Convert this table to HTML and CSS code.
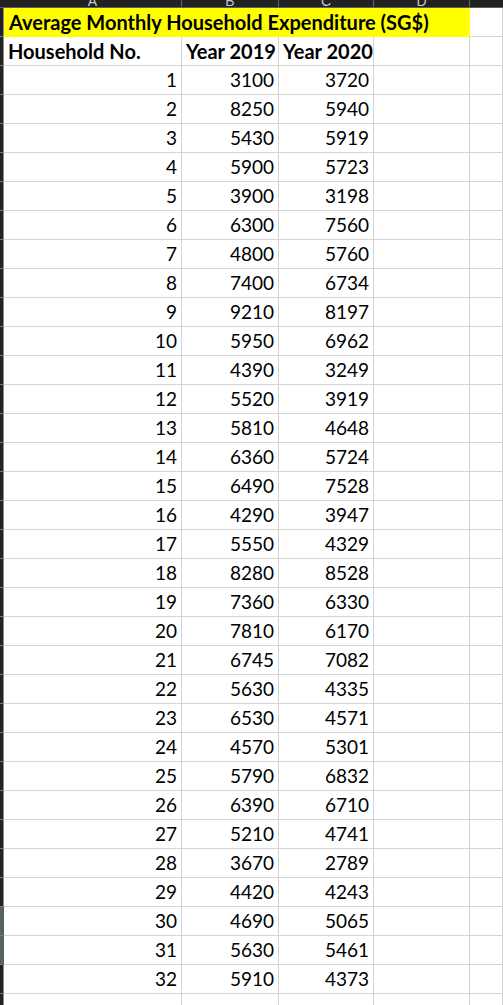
FILE: index.html
```html
<!DOCTYPE html>
<html>
<head>
<meta charset="utf-8">
<link rel="stylesheet" href="styles.css">
</head>
<body>
<div class="sheet">
  <div class="row colbar">
    <div class="corner"></div>
    <div class="ch"><span>A</span></div>
    <div class="ch"><span>B</span></div>
    <div class="ch"><span>C</span></div>
    <div class="ch"><span>D</span></div>
    <div class="ch last"></div>
  </div>
  <div class="row">
    <div class="rh"></div>
    <div class="cell title">Average Monthly Household Expenditure (SG$)</div>
    <div class="cell"></div>
  </div>
  <div class="row">
    <div class="rh"></div>
    <div class="cell bold">Household No.</div>
    <div class="cell bold">Year 2019</div>
    <div class="cell bold">Year 2020</div>
    <div class="cell"></div>
    <div class="cell"></div>
  </div>
  <div class="row"><div class="rh"></div><div class="cell num">1</div><div class="cell num">3100</div><div class="cell num">3720</div><div class="cell"></div><div class="cell"></div></div>
  <div class="row"><div class="rh"></div><div class="cell num">2</div><div class="cell num">8250</div><div class="cell num">5940</div><div class="cell"></div><div class="cell"></div></div>
  <div class="row"><div class="rh"></div><div class="cell num">3</div><div class="cell num">5430</div><div class="cell num">5919</div><div class="cell"></div><div class="cell"></div></div>
  <div class="row"><div class="rh"></div><div class="cell num">4</div><div class="cell num">5900</div><div class="cell num">5723</div><div class="cell"></div><div class="cell"></div></div>
  <div class="row"><div class="rh"></div><div class="cell num">5</div><div class="cell num">3900</div><div class="cell num">3198</div><div class="cell"></div><div class="cell"></div></div>
  <div class="row"><div class="rh"></div><div class="cell num">6</div><div class="cell num">6300</div><div class="cell num">7560</div><div class="cell"></div><div class="cell"></div></div>
  <div class="row"><div class="rh"></div><div class="cell num">7</div><div class="cell num">4800</div><div class="cell num">5760</div><div class="cell"></div><div class="cell"></div></div>
  <div class="row"><div class="rh"></div><div class="cell num">8</div><div class="cell num">7400</div><div class="cell num">6734</div><div class="cell"></div><div class="cell"></div></div>
  <div class="row"><div class="rh"></div><div class="cell num">9</div><div class="cell num">9210</div><div class="cell num">8197</div><div class="cell"></div><div class="cell"></div></div>
  <div class="row"><div class="rh"></div><div class="cell num">10</div><div class="cell num">5950</div><div class="cell num">6962</div><div class="cell"></div><div class="cell"></div></div>
  <div class="row"><div class="rh"></div><div class="cell num">11</div><div class="cell num">4390</div><div class="cell num">3249</div><div class="cell"></div><div class="cell"></div></div>
  <div class="row"><div class="rh"></div><div class="cell num">12</div><div class="cell num">5520</div><div class="cell num">3919</div><div class="cell"></div><div class="cell"></div></div>
  <div class="row"><div class="rh"></div><div class="cell num">13</div><div class="cell num">5810</div><div class="cell num">4648</div><div class="cell"></div><div class="cell"></div></div>
  <div class="row"><div class="rh"></div><div class="cell num">14</div><div class="cell num">6360</div><div class="cell num">5724</div><div class="cell"></div><div class="cell"></div></div>
  <div class="row"><div class="rh"></div><div class="cell num">15</div><div class="cell num">6490</div><div class="cell num">7528</div><div class="cell"></div><div class="cell"></div></div>
  <div class="row"><div class="rh"></div><div class="cell num">16</div><div class="cell num">4290</div><div class="cell num">3947</div><div class="cell"></div><div class="cell"></div></div>
  <div class="row"><div class="rh"></div><div class="cell num">17</div><div class="cell num">5550</div><div class="cell num">4329</div><div class="cell"></div><div class="cell"></div></div>
  <div class="row"><div class="rh"></div><div class="cell num">18</div><div class="cell num">8280</div><div class="cell num">8528</div><div class="cell"></div><div class="cell"></div></div>
  <div class="row"><div class="rh"></div><div class="cell num">19</div><div class="cell num">7360</div><div class="cell num">6330</div><div class="cell"></div><div class="cell"></div></div>
  <div class="row"><div class="rh"></div><div class="cell num">20</div><div class="cell num">7810</div><div class="cell num">6170</div><div class="cell"></div><div class="cell"></div></div>
  <div class="row"><div class="rh"></div><div class="cell num">21</div><div class="cell num">6745</div><div class="cell num">7082</div><div class="cell"></div><div class="cell"></div></div>
  <div class="row"><div class="rh"></div><div class="cell num">22</div><div class="cell num">5630</div><div class="cell num">4335</div><div class="cell"></div><div class="cell"></div></div>
  <div class="row"><div class="rh"></div><div class="cell num">23</div><div class="cell num">6530</div><div class="cell num">4571</div><div class="cell"></div><div class="cell"></div></div>
  <div class="row"><div class="rh"></div><div class="cell num">24</div><div class="cell num">4570</div><div class="cell num">5301</div><div class="cell"></div><div class="cell"></div></div>
  <div class="row"><div class="rh"></div><div class="cell num">25</div><div class="cell num">5790</div><div class="cell num">6832</div><div class="cell"></div><div class="cell"></div></div>
  <div class="row"><div class="rh"></div><div class="cell num">26</div><div class="cell num">6390</div><div class="cell num">6710</div><div class="cell"></div><div class="cell"></div></div>
  <div class="row"><div class="rh"></div><div class="cell num">27</div><div class="cell num">5210</div><div class="cell num">4741</div><div class="cell"></div><div class="cell"></div></div>
  <div class="row"><div class="rh"></div><div class="cell num">28</div><div class="cell num">3670</div><div class="cell num">2789</div><div class="cell"></div><div class="cell"></div></div>
  <div class="row"><div class="rh"></div><div class="cell num">29</div><div class="cell num">4420</div><div class="cell num">4243</div><div class="cell"></div><div class="cell"></div></div>
  <div class="row"><div class="rh sel"></div><div class="cell num">30</div><div class="cell num">4690</div><div class="cell num">5065</div><div class="cell"></div><div class="cell"></div></div>
  <div class="row"><div class="rh sel"></div><div class="cell num">31</div><div class="cell num">5630</div><div class="cell num">5461</div><div class="cell"></div><div class="cell"></div></div>
  <div class="row"><div class="rh"></div><div class="cell num">32</div><div class="cell num">5910</div><div class="cell num">4373</div><div class="cell"></div><div class="cell"></div></div>
  <div class="row"><div class="rh"></div><div class="cell"></div><div class="cell"></div><div class="cell"></div><div class="cell"></div><div class="cell"></div></div>
</div>
</body>
</html>
```

FILE: styles.css
```css
html, body {
  margin: 0;
  padding: 0;
  background: #ffffff;
  overflow: hidden;
}

.sheet {
  width: 503px;
  font-family: "Lato", "Open Sans", sans-serif;
  font-size: 19px;
  color: #000000;
}

.row {
  display: grid;
  grid-template-columns: 4px 178px 97px 95px 96px 1fr;
  height: 29px;
}

.colbar {
  height: 8px;
  background: #222222;
  border-bottom: 1px solid #5e5e5e;
  box-sizing: border-box;
  overflow: hidden;
}

.corner {
  background: #222222;
}

.ch {
  border-right: 1px solid #666666;
  display: flex;
  justify-content: center;
  align-items: flex-end;
  overflow: hidden;
}

.ch.last {
  border-right: none;
}

.ch span {
  font-family: "Liberation Sans", sans-serif;
  font-size: 14px;
  line-height: 16px;
  color: #c8c8c8;
  margin-bottom: -2px;
}

.rh {
  background: #222222;
  border-right: 1px solid #8a8a8a;
  border-bottom: 1px solid #7a7a7a;
  box-sizing: border-box;
}

.rh.sel {
  background: #5e5e5e;
  border-right: 1px solid #1f7a47;
}

.cell {
  box-sizing: border-box;
  border-right: 1px solid #d4d4d4;
  border-bottom: 1px solid #d4d4d4;
  line-height: 28px;
  padding: 0 4px;
  white-space: nowrap;
  overflow: hidden;
}

.title {
  grid-column: span 4;
  background: #ffff00;
  border-color: #ffff00;
  font-weight: 700;
  font-size: 20px;
  padding-left: 5px;
}

.bold {
  font-weight: 700;
  font-size: 20px;
}

.num {
  text-align: right;
}
```
